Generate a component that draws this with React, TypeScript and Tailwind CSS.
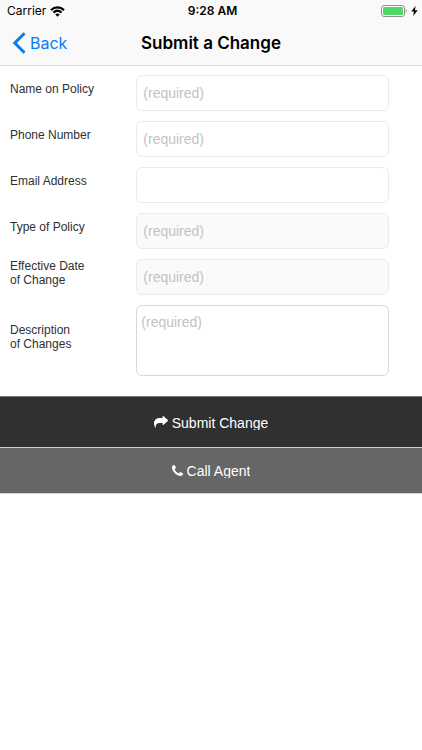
import type { ReactNode } from "react";

const fieldBase =
  "block w-full rounded-md border font-['Liberation_Sans',Arial,sans-serif] text-[14px] text-[#303030] placeholder:text-[#c2c2c6] outline-none";

function FormRow({ id, label, children }: { id: string; label: ReactNode; children: ReactNode }) {
  return (
    <div className="flex items-center">
      <label htmlFor={id} className="w-1/3 shrink-0 pb-2 text-[12px] leading-[14px] text-[#303030]">
        {label}
      </label>
      <div className="min-w-0 flex-1">{children}</div>
    </div>
  );
}

function StatusBar() {
  return (
    <div className="grid h-[22px] grid-cols-3 items-center pl-[7px] pr-1 text-[12px] text-black">
      <div className="flex items-center gap-1">
        <span>Carrier</span>
        <svg width="15" height="11" viewBox="0 0 15 11" fill="none" stroke="black" strokeWidth="2.2" aria-hidden="true">
          <path d="M1 4.1C4.8.5 10.2.5 14 4.1" />
          <path d="M3.5 6.6c2.4-2.2 5.6-2.2 8 0" />
          <path d="M5.3 8.4c1.3-1.2 3.1-1.2 4.4 0L7.5 10.700z" fill="black" stroke="none" />
        </svg>
      </div>
      <span className="text-center font-semibold">9:28 AM</span>
      <div className="flex items-center justify-end gap-1">
        <svg width="26" height="12" viewBox="0 0 26 12" aria-hidden="true">
          <rect x=".5" y=".5" width="23" height="11" rx="2.5" fill="#fff" stroke="#929292" />
          <rect x="2" y="2" width="20" height="8" rx="1" fill="#4cd964" />
          <path d="M24.6 4v4c1.4-.6 1.4-3.4 0-4z" fill="#929292" />
        </svg>
        <svg width="7" height="10" viewBox="0 0 7 10" aria-hidden="true">
          <path d="M4.5 0 .3 5.5h2.6L2.2 10l4.5-5.8H4z" fill="black" />
        </svg>
      </div>
    </div>
  );
}

export default function App() {
  return (
    <div className="min-h-screen bg-white font-['Liberation_Sans',Arial,sans-serif]">
      <header className="border-b border-[#dedede] bg-[#f9f9f9] font-[Inter,sans-serif]">
        <StatusBar />
        <div className="grid h-[43px] grid-cols-[1fr_auto_1fr] items-center px-3 pb-px">
          <button type="button" className="flex items-center gap-1 text-[16px] leading-6 text-[#087cf5]">
            <svg width="14" height="22" viewBox="0 0 14 22" fill="none" stroke="currentColor" strokeWidth="3" aria-hidden="true">
              <path d="M12.5 1.2 2.8 11l9.7 9.8" />
            </svg>
            Back
          </button>
          <h1 className="text-[17px] leading-6 font-semibold text-black">Submit a Change</h1>
        </div>
      </header>

      <form>
        <div className="flex flex-col gap-2.5 pt-[9px] pr-[33px] pb-5 pl-2.5">
          <FormRow id="name" label="Name on Policy">
            <input id="name" type="text" placeholder="(required)" className={`${fieldBase} h-9 border-[#ebebeb] bg-white px-1.5`} />
          </FormRow>
          <FormRow id="phone" label="Phone Number">
            <input id="phone" type="tel" placeholder="(required)" className={`${fieldBase} h-9 border-[#ebebeb] bg-white px-1.5`} />
          </FormRow>
          <FormRow id="email" label="Email Address">
            <input id="email" type="email" className={`${fieldBase} h-9 border-[#ebebeb] bg-white px-1.5`} />
          </FormRow>
          <FormRow id="type" label="Type of Policy">
            <input id="type" type="text" placeholder="(required)" className={`${fieldBase} h-9 border-[#ebebeb] bg-[#fafafa] px-1.5`} />
          </FormRow>
          <FormRow id="date" label={<>Effective Date<br />of Change</>}>
            <input id="date" type="text" placeholder="(required)" className={`${fieldBase} h-9 border-[#ebebeb] bg-[#fafafa] px-1.5`} />
          </FormRow>
          <FormRow id="description" label={<>Description<br />of Changes</>}>
            <textarea id="description" placeholder="(required)" className={`${fieldBase} h-[71px] resize-none border-[#d8d8d8] bg-white px-1 py-2 leading-4`} />
          </FormRow>
        </div>

        <button type="button" className="flex h-[52px] w-full items-center justify-center gap-1 border-y border-t-[#777] border-b-[#d0cdd0] bg-[#303030] text-[14px] text-white">
          <svg width="14" height="12" viewBox="0 0 14 12" fill="currentColor" aria-hidden="true">
            <path d="M13.8 4 9.6.2Q8.600-.500 8.600.700V2.100H6.600C2.300 2.100 0 3.900 0 7.600c0 1.400.500 2.900 1.200 4 .200.300.700.200.600-.200C1.500 8.300 2.600 6.900 6.600 6.900h2v1.500q0 1.100 1 .400l4.200-3.800q.500-.500 0-1z" />
          </svg>
          <span className="h-[15px] overflow-hidden leading-4">Submit Change</span>
        </button>
        <button type="button" className="flex h-[46px] w-full items-center justify-center gap-1 border-b border-[#d8d8d8] bg-[#666] text-[14px] text-white">
          <svg width="11" height="11" viewBox="0 0 1408 1408" fill="currentColor" aria-hidden="true">
            <path d="M1408 1112q0 27-10 70.500t-21 68.500q-21 50-122 106-94 51-186 51-27 0-53-3.500t-57.500-12.500-47-14.500-55.500-20.500-49-18q-98-35-175-83-127-79-264-216t-216-264q-48-77-83-175-3-9-18-49t-20.500-55.500-14.500-47-12.500-57.500-3.500-53q0-92 51-186 56-101 106-122 25-11 68.500-21t70.500-10q14 0 21 3 18 6 53 76 11 19 30 54t35 63.500 31 53.500q3 4 17.500 25t21.500 35.500 7 28.500q0 20-28.500 50t-62 55-62 53-28.500 46q0 9 5 22.500t8.500 20.500 14 24 11.500 19q76 137 174 235t235 174q2 1 19 11.500t24 14 20.500 8.500 22.500 5q18 0 46-28.500t53-62 55-62 50-28.500q14 0 28.500 7t35.500 21.500 25 17.500q25 15 53.500 31t63.500 35 54 30q70 35 76 53 3 7 3 21z" />
          </svg>
          <span className="h-[15px] overflow-hidden leading-4">Call Agent</span>
        </button>
      </form>
    </div>
  );
}
